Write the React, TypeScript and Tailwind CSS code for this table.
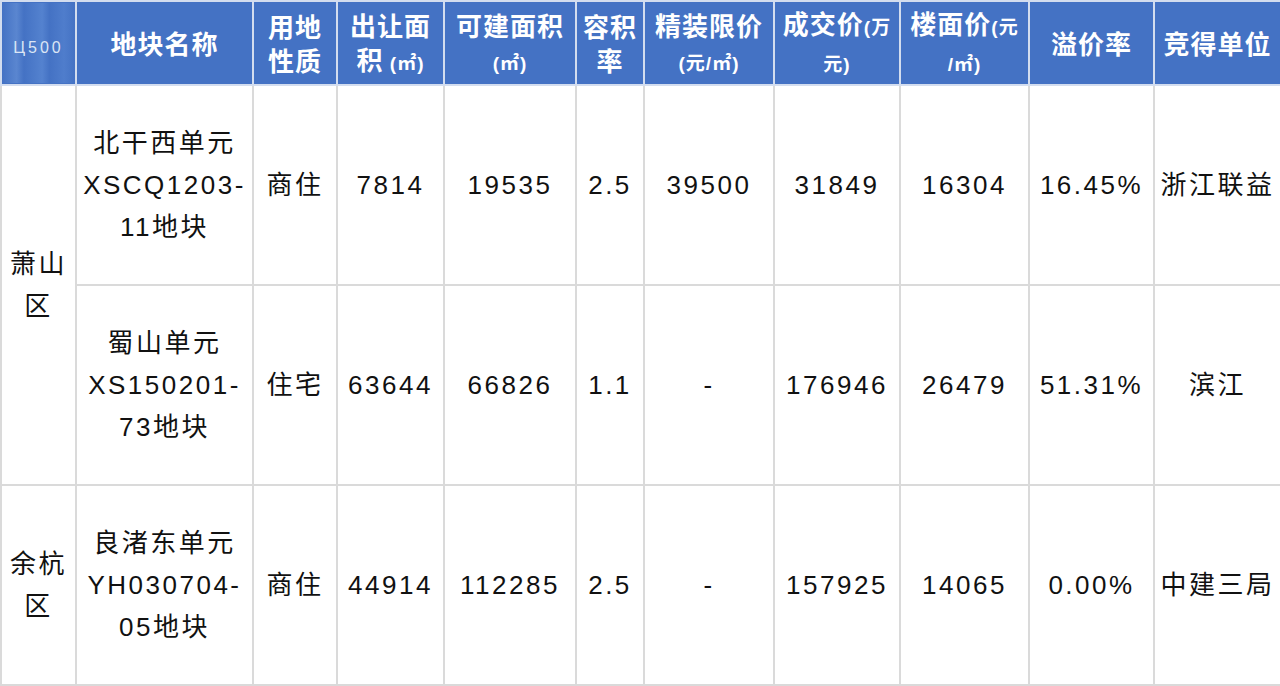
import React from "react"

const widths = [75, 177, 84, 107, 132, 68, 130, 126, 129, 125, 127]

type Row = {
  district?: { lines: string[]; span: number }
  name: string[]
  use: string
  area: string
  build: string
  far: string
  limit: string
  deal: string
  floor: string
  premium: string
  winner: string
}

const rows: Row[] = [
  {
    district: { lines: ["萧山", "区"], span: 2 },
    name: ["北干西单元", "XSCQ1203-", "11地块"],
    use: "商住",
    area: "7814",
    build: "19535",
    far: "2.5",
    limit: "39500",
    deal: "31849",
    floor: "16304",
    premium: "16.45%",
    winner: "浙江联益",
  },
  {
    name: ["蜀山单元", "XS150201-", "73地块"],
    use: "住宅",
    area: "63644",
    build: "66826",
    far: "1.1",
    limit: "-",
    deal: "176946",
    floor: "26479",
    premium: "51.31%",
    winner: "滨江",
  },
  {
    district: { lines: ["余杭", "区"], span: 1 },
    name: ["良渚东单元", "YH030704-", "05地块"],
    use: "商住",
    area: "44914",
    build: "112285",
    far: "2.5",
    limit: "-",
    deal: "157925",
    floor: "14065",
    premium: "0.00%",
    winner: "中建三局",
  },
]

const th = "border-2 border-[#d3ddef] bg-[#4472c4] p-0 pt-[4px] text-center align-middle font-bold text-white text-[26px] leading-[34px] tracking-[1px]"
const td = "border-2 border-[#dadada] p-0 text-center align-middle text-[#111] text-[26px] leading-[42px] tracking-[2.5px]"
const small = "text-[19px] font-bold"

export default function App() {
  return (
    <div className="w-[1280px] h-[686px] overflow-hidden bg-white font-['Liberation_Sans','Noto_Sans_CJK_SC',sans-serif]">
      <table className="table-fixed border-collapse w-[1280px]">
        <colgroup>
          {widths.map((w, i) => (
            <col key={i} style={{ width: w }} />
          ))}
        </colgroup>
        <thead>
          <tr className="h-[84px]">
            <th className="border-2 border-[#d3ddef] bg-[#4472c4] p-0 align-middle">
              {/* faint scan artifact in corner cell */}
              <div className="flex h-[80px] items-center justify-center pt-[10px] bg-[linear-gradient(90deg,#4472c4_0%,#5a86d0_20%,#4472c4_30%,#5482cf_55%,#4472c4_65%,#4f7dcc_85%,#4472c4_100%)]">
                <span className="text-[16px] font-normal tracking-[3px] text-[#dbe5f5]">Ц500</span>
              </div>
            </th>
            <th className={th}>地块名称</th>
            <th className={th}>
              用地
              <br />
              性质
            </th>
            <th className={th}>
              出让面
              <br />积<span className={small}> (㎡)</span>
            </th>
            <th className={th}>
              可建面积
              <br />
              <span className={small}>(㎡)</span>
            </th>
            <th className={th}>
              容积
              <br />率
            </th>
            <th className={th}>
              精装限价
              <br />
              <span className={small}>(元/㎡)</span>
            </th>
            <th className={th}>
              成交价<span className={small}>(万</span>
              <br />
              <span className={small}>元)</span>
            </th>
            <th className={th}>
              楼面价<span className={small}>(元</span>
              <br />
              <span className={small}>/㎡)</span>
            </th>
            <th className={th}>溢价率</th>
            <th className={th}>竞得单位</th>
          </tr>
        </thead>
        <tbody>
          {rows.map((r, i) => (
            <tr key={i} className="h-[200px]">
              {r.district && (
                <td className={td} rowSpan={r.district.span}>
                  {r.district.lines.map((l, j) => (
                    <div key={j}>{l}</div>
                  ))}
                </td>
              )}
              <td className={td}>
                {r.name.map((l, j) => (
                  <div key={j}>{l}</div>
                ))}
              </td>
              <td className={td}>{r.use}</td>
              <td className={td}>{r.area}</td>
              <td className={td}>{r.build}</td>
              <td className={td}>{r.far}</td>
              <td className={td}>{r.limit}</td>
              <td className={td}>{r.deal}</td>
              <td className={td}>{r.floor}</td>
              <td className={td}>{r.premium}</td>
              <td className={td}>{r.winner}</td>
            </tr>
          ))}
        </tbody>
      </table>
    </div>
  )
}
